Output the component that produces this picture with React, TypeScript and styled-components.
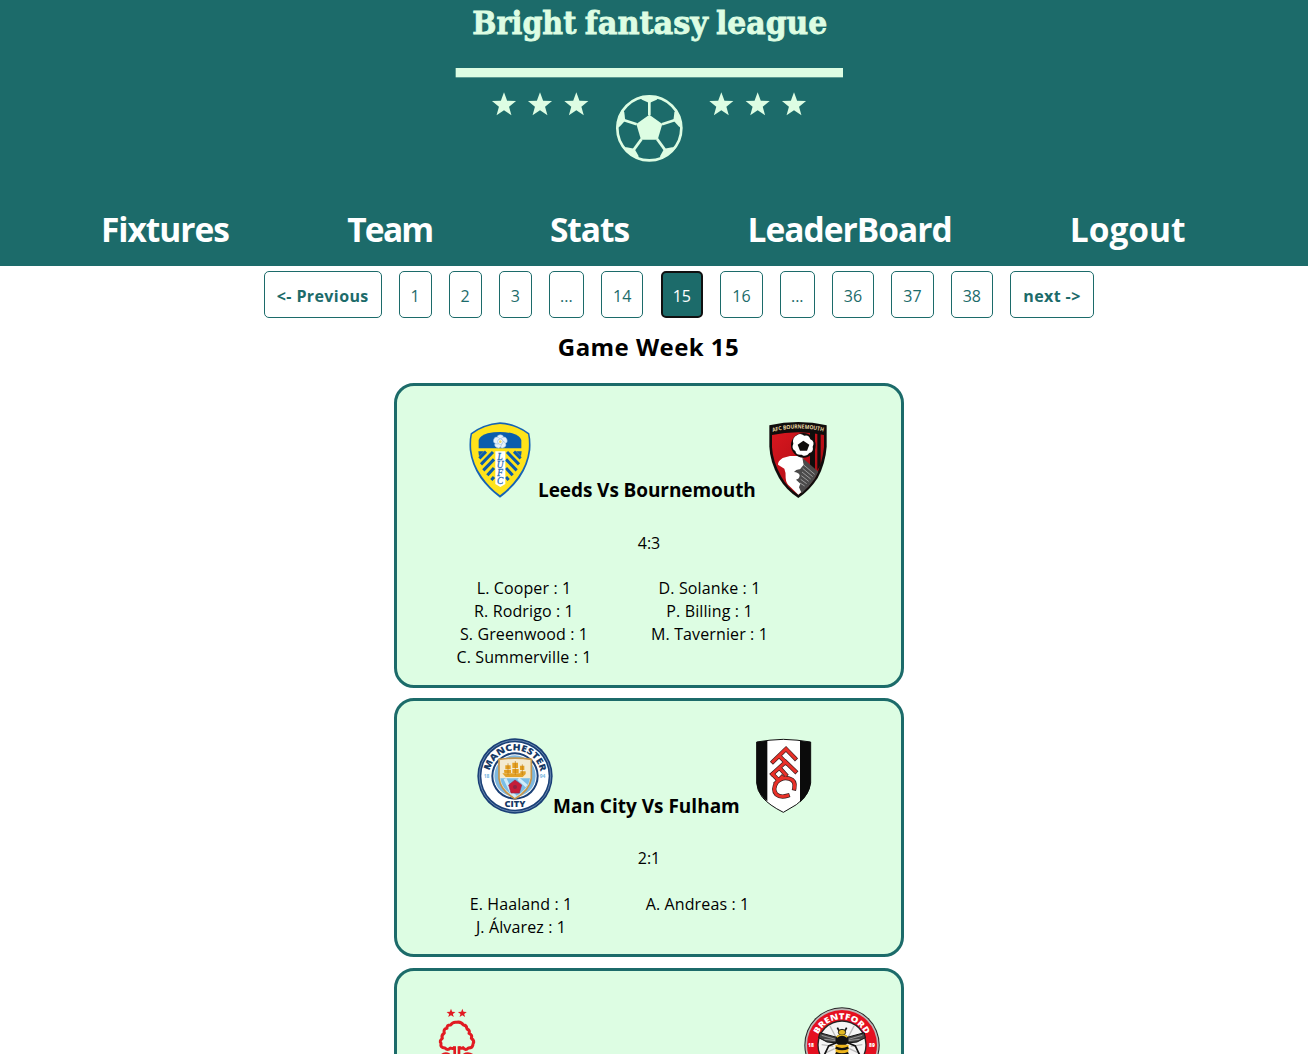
import React from "react";
import styled, { createGlobalStyle } from "styled-components";

const teal = "#1c6b6a";
const mint = "#ddfde3";

const Global = createGlobalStyle`
  * { box-sizing: border-box; }
  body { margin: 0; background: #fff; font-family: "Open Sans", "Noto Sans", sans-serif; color: #000; overflow: hidden; }
`;

const Page = styled.div`
  height: 1054px;
  overflow: hidden;
  display: flex;
  flex-direction: column;
  align-items: center;
`;

const Header = styled.header`
  width: 100%;
  height: 266px;
  flex: none;
  background: ${teal};
  display: flex;
  flex-direction: column;
`;

const Logo = styled.svg`
  display: block;
  width: 420px;
  height: 180px;
  margin-left: 440px;
  flex: none;
  overflow: visible;
`;

const Nav = styled.nav`
  display: flex;
  gap: 118.7px;
  padding: 24px 0 0 101px;
`;

const NavLink = styled.a<{ $w: number; $ls?: number }>`
  width: ${(p) => p.$w}px;
  font-size: 33.5px;
  line-height: 50px;
  font-weight: 700;
  color: #fff;
  white-space: nowrap;
  letter-spacing: ${(p) => p.$ls ?? 0}px;
`;

const Pager = styled.div`
  display: flex;
  gap: 17.1px;
  margin-top: 5px;
  width: 830px;
  margin-left: 50px;
  flex: none;
`;

const PageButton = styled.button<{ $w: number; $active?: boolean; $bold?: boolean }>`
  width: ${(p) => p.$w}px;
  height: 47px;
  flex: none;
  padding: 3px 0 0;
  border: ${(p) => (p.$active ? "2px solid #101010" : `1px solid ${teal}`)};
  border-radius: 5px;
  background: ${(p) => (p.$active ? teal : "#fff")};
  color: ${(p) => (p.$active ? "#fff" : teal)};
  font-family: inherit;
  font-size: 16px;
  font-weight: ${(p) => (p.$bold ? 700 : 400)};
  letter-spacing: ${(p) => (p.$bold ? 0.4 : 0)}px;
  white-space: nowrap;
`;

const Title = styled.h2`
  margin: 11px 11px 0 0;
  font-size: 24px;
  line-height: 36px;
  font-weight: 700;
  letter-spacing: 0.45px;
  width: 181px;
  flex: none;
  white-space: nowrap;
  display: flex;
  justify-content: center;
`;

const Cards = styled.main`
  width: 510px;
  margin-top: 18px;
  margin-left: -10px;
  display: flex;
  flex-direction: column;
`;

const Card = styled.section<{ $h: number; $top: number; $after: number }>`
  height: ${(p) => p.$h}px;
  flex: none;
  padding-top: ${(p) => p.$top}px;
  margin-bottom: ${(p) => p.$after}px;
  border: 3px solid ${teal};
  border-radius: 20px;
  background: ${mint};
  display: flex;
  flex-direction: column;
`;

const Match = styled.div`
  display: flex;
  justify-content: center;
  height: 76px;
`;

const Crest = styled.svg`
  width: 76px;
  height: 76px;
  display: block;
  flex: none;
`;

const Teams = styled.h3<{ $w: number; $ls: number }>`
  width: ${(p) => p.$w}px;
  margin: 54px 5px 0 0;
  font-size: 19px;
  line-height: 28px;
  font-weight: 700;
  letter-spacing: ${(p) => p.$ls}px;
  white-space: nowrap;
`;

const Score = styled.div<{ $top: number }>`
  margin-top: ${(p) => p.$top}px;
  line-height: 23px;
  font-size: 16px;
  text-align: center;
`;

const Scorers = styled.div<{ $left: number; $gap: number; $top: number }>`
  display: flex;
  gap: ${(p) => p.$gap}px;
  padding-left: ${(p) => p.$left}px;
  margin-top: ${(p) => p.$top}px;
`;

const ScorerList = styled.ul<{ $w: number }>`
  list-style: none;
  margin: 0;
  padding: 0;
  width: ${(p) => p.$w}px;
  display: flex;
  flex-direction: column;
  align-items: center;
  font-size: 16px;
  line-height: 23px;
  letter-spacing: 0.12px;
  white-space: nowrap;
`;

const starPoints = (cx: number, cy: number, r: number) =>
  Array.from({ length: 10 }, (_, i) => {
    const a = (Math.PI * i) / 5 - Math.PI / 2;
    const q = i % 2 ? r * 0.42 : r;
    return `${cx + q * Math.cos(a)},${cy + q * Math.sin(a)}`;
  }).join(" ");

const LeagueLogo = () => (
  <Logo viewBox="0 0 1260 540" fill={mint}>
    <g fontFamily="'DejaVu Serif', serif" fontWeight="700" fontSize="96" stroke={mint} strokeWidth="2.5">
      <text x="97" y="103" textLength="312" lengthAdjust="spacingAndGlyphs">Bright</text>
      <text x="434" y="103" textLength="370" lengthAdjust="spacingAndGlyphs">fantasy</text>
      <text x="828" y="103" textLength="334" lengthAdjust="spacingAndGlyphs">league</text>
    </g>
    <rect x="47" y="204" width="1162" height="28" />
    {[192, 300, 409, 844, 953, 1062].map((x) => (
      <polygon key={x} points={starPoints(x, 315, 38)} />
    ))}
    <circle cx="628" cy="385" r="96" fill="none" stroke={mint} strokeWidth="8" />
    {[0, 72, 144, 216, 288].map((a) => (
      <g key={a} transform={`rotate(${a} 628 385)`}>
        <path d="M628 345V306" stroke={mint} strokeWidth="8" />
        <path d="M598 291Q628 283 658 291L650 299L628 309L606 299Z" />
      </g>
    ))}
    <polygon points="628,344 667,372 653,419 603,419 589,372" />
  </Logo>
);

const Leeds = () => (
  <Crest viewBox="36 36 228 228">
    <path d="M150 37Q177 38 201 49Q222 57 238 70Q243 92 241 120Q236 164 209 204Q184 238 150 263Q116 238 91 204Q64 164 59 120Q57 92 62 70Q98 42 150 37Z" fill="#1763b5" />
    <path d="M150 42Q199 45 234 73Q238 91 236 119Q231 163 204 200Q181 233 150 256Q119 233 96 200Q69 163 64 119Q62 91 66 73Q101 45 150 42Z" fill="#ffe31b" />
    <path d="M86 115V90Q91 76 113 70Q150 62 187 70Q209 76 214 90V115Z" fill="#0b5dad" />
    <g stroke="#0b5dad" strokeWidth="9">
      <path d="M88 145L108 125M93 163L129 126M100 181L132 148M112 196L132 174M124 210L132 201M212 145L192 125M207 163L171 126M200 181L168 148M188 196L168 174M176 210L168 201" />
    </g>
    <path d="M85 124H102L87 139ZM215 124H198L213 139Z" fill="#0b5dad" />
    <path d="M136 124H166V222L151 231L136 222Z" fill="#fff" />
    {[0, 72, 144, 216, 288].map((a) => (
      <circle key={a} cx="151" cy="84" r="10" fill="#e8f2fa" stroke="#8db5d9" strokeWidth="1.5" transform={`rotate(${a} 151 95)`} />
    ))}
    <circle cx="151" cy="95" r="8" fill="#fff" stroke="#8db5d9" strokeWidth="2" />
    <circle cx="151" cy="95" r="4" fill="#e7d66c" />
    <g fill="#2a6bb5" fontFamily="'Liberation Serif', serif" fontStyle="italic" fontSize="28" textAnchor="middle" stroke="#2a6bb5" strokeWidth="0.8">
      <text x="150" y="150">L</text>
      <text x="150" y="175">U</text>
      <text x="150" y="199">F</text>
      <text x="150" y="223">C</text>
    </g>
  </Crest>
);

const Bournemouth = () => (
  <Crest viewBox="30 36 228 228">
    <defs>
      <linearGradient id="bred" x1="0" y1="0" x2="1" y2="1">
        <stop offset="0" stopColor="#d8171f" />
        <stop offset=".6" stopColor="#b80f17" />
        <stop offset="1" stopColor="#8b0b11" />
      </linearGradient>
      <path id="bname" d="M68 66Q145 45 224 66" />
    </defs>
    <path d="M58 46Q101 36 145 36Q188 36 230 46V110Q226 161 203 204Q180 240 145 264Q108 240 87 204Q60 156 58 110Z" fill="#100d0c" />
    <path d="M66 75Q144 58 222 75V112Q217 159 197 200Q176 233 145 254Q112 233 94 200Q68 154 66 112Z" fill="url(#bred)" />
    <path d="M180 67L195 69V190L180 172ZM202 70L212 71V165L202 181Z" fill="#100d0c" />
    <text fill="#e9d7a5" fontFamily="'Open Sans', sans-serif" fontWeight="700" fontSize="17">
      <textPath href="#bname" textLength="154" lengthAdjust="spacingAndGlyphs">AFC BOURNEMOUTH</textPath>
    </text>
    <path d="M98 144L120 138H153Q163 144 161 158L184 178L200 190L176 227L145 254L119 229Q108 220 107 204Q108 187 103 176L84 164Q83 154 98 144Z" fill="#fff" />
    <path d="M157 143L205 185Q196 207 176 229L155 250L147 232L151 221L138 209Q149 207 149 195Q145 187 132 186Q138 177 150 178L161 164Z" fill="#4b4a4a" />
    <g stroke="#c4c4c4" strokeWidth="2">
      {[1, 2, 3, 4, 5, 6].map((i) => (
        <path key={i} d={`M${162 - i * 2} ${153 + i * 11}L${200 - i * 6} ${186 + i * 7}`} />
      ))}
    </g>
    <circle cx="160" cy="106" r="37" fill="#100d0c" />
    <path d="M142 75Q151 68 163 77Q177 73 181 88Q196 95 188 110Q192 125 178 129Q168 143 155 134Q139 137 136 123Q123 115 130 101Q125 83 142 75Z" fill="#fff" />
    <path d="M160 92L178 104L171 122H150L143 104Z" fill="#100d0c" />
  </Crest>
);

const ManCity = () => (
  <Crest viewBox="35 37 228 228">
    <defs>
      <path id="cityTop" d="M72 151A77 77 0 0 1 226 151" />
    </defs>
    <circle cx="149" cy="151" r="113" fill="#193f76" />
    <circle cx="149" cy="151" r="107" fill="none" stroke="#8da8c9" strokeWidth="2" />
    <circle cx="149" cy="151" r="101" fill="#fff" />
    <circle cx="149" cy="151" r="71" fill="#193f76" />
    <circle cx="149" cy="151" r="65" fill="#fff" />
    <circle cx="149" cy="151" r="62" fill="#7eb7df" />
    <path d="M101 101Q149 94 198 101V158Q193 194 149 219Q105 194 101 158Z" fill="#f3ead0" stroke="#c4954b" strokeWidth="5" />
    <path d="M105 158H194Q190 191 149 214Q110 193 105 158Z" fill="#79bde8" />
    <path d="M119 159L139 202L151 213M159 159L184 181" stroke="#d1ecf9" strokeWidth="9" fill="none" />
    <path d="M111 143L121 154H172L181 145V137H165V143Z" fill="#e2a126" />
    <path d="M120 119H136V131H120ZM141 111H158V127H141ZM164 120H177V133H164ZM116 133H137V142H117ZM141 130H160V142H141Z" fill="#e4a021" />
    <path d="M128 113V148M150 106V148M171 116V148" stroke="#bd7b19" strokeWidth="2" />
    <polygon points="149,163 169,178 162,202 137,202 130,178" fill="#c51d39" stroke="#9a2444" strokeWidth="2" />
    <circle cx="149" cy="184" r="6" fill="#8d2441" />
    <g fill="#173965" fontFamily="'Open Sans', sans-serif" fontWeight="800" fontSize="27">
      <text><textPath href="#cityTop" startOffset="15" textLength="214" lengthAdjust="spacingAndGlyphs">MANCHESTER</textPath></text>
      <text x="149" y="244" textAnchor="middle" textLength="63" lengthAdjust="spacingAndGlyphs">CITY</text>
    </g>
    <g fill="#79b6df" fontFamily="'Open Sans', sans-serif" fontWeight="700" fontSize="15">
      <text x="55" y="158">18</text>
      <text x="223" y="158">94</text>
    </g>
  </Crest>
);

const Fulham = () => (
  <Crest viewBox="15 37 228 228">
    <path d="M50 49Q90 42 130 41Q171 42 212 49V172Q207 209 169 237L130 260Q88 239 67 215Q51 194 50 172Z" fill="#fff" stroke="#111" strokeWidth="3" />
    <path d="M50 49L82 45V227Q51 204 50 172ZM180 45L212 49V172Q210 205 180 230Z" fill="#0b0b0b" />
    <g fill="none" strokeLinecap="square" strokeLinejoin="miter">
      {[["#3a2020", 13], ["#e93028", 9]].map(([c, w]) => (
        <g key={c} stroke={c} strokeWidth={w}>
          <path d="M99 108L138 70L165 98M118 91L138 111M97 145L137 109L166 137M119 127L137 147" />
          <path d="M163 188Q168 165 148 159Q127 152 110 170Q96 191 109 206Q122 217 143 210M98 146L111 159M108 172L126 154" />
        </g>
      ))}
    </g>
  </Crest>
);

const Forest = () => (
  <Crest viewBox="101 141 228 228">
    <polygon points={starPoints(197, 160, 14)} fill="#e11b22" />
    <polygon points={starPoints(231, 160, 14)} fill="#e11b22" />
    <path d="M208 260Q205 269 195 264Q187 273 179 264Q164 263 167 250Q161 243 171 235Q167 226 177 219Q173 207 185 205Q184 194 196 195Q202 185 214 187Q227 184 234 195Q244 195 245 207Q255 211 251 220Q262 224 258 235Q269 243 263 252Q263 264 249 264Q241 273 233 263Q225 268 221 260" fill="none" stroke="#e11b22" strokeWidth="9" strokeLinejoin="round" />
    <path d="M204 259H212V300H204ZM217 259H225V300H217Z" fill="#e11b22" />
    <path d="M168 286Q179 276 193 284M235 284Q249 276 263 286" stroke="#e11b22" strokeWidth="7" fill="none" />
  </Crest>
);

const Brentford = () => (
  <Crest viewBox="72 141 228 228">
    <defs>
      <path id="beeTop" d="M108 255A77 77 0 0 1 262 255" />
    </defs>
    <circle cx="186" cy="255" r="113" fill="#252525" />
    <circle cx="186" cy="255" r="110" fill="#bdb8b8" />
    <circle cx="186" cy="255" r="105" fill="#e51020" />
    <circle cx="186" cy="255" r="74" fill="#242424" />
    <circle cx="186" cy="255" r="70" fill="#f5f5f5" />
    <path d="M150 198L173 242M222 198L199 242M125 254L160 259M247 254L212 259M132 281L164 266M240 281L208 266" stroke="#bcbcbc" strokeWidth="4" />
    <path d="M174 233L119 218L116 233L141 246L171 249ZM198 233L253 218L256 233L231 246L201 249Z" fill="#454545" stroke="#111" strokeWidth="3" />
    <path d="M125 226L170 239M133 238L170 242M247 226L202 239M239 238L202 242" stroke="#c2c2c2" strokeWidth="2" />
    <path d="M169 248L146 258L133 285M203 248L226 258L239 285M179 216L172 203M193 216L200 203" stroke="#121212" strokeWidth="5" fill="none" />
    <ellipse cx="186" cy="217" rx="11" ry="9" fill="#e1b823" stroke="#222" strokeWidth="3" />
    <ellipse cx="186" cy="240" rx="20" ry="18" fill="#111" />
    <path d="M170 231Q186 219 202 231" stroke="#e1b823" strokeWidth="5" fill="none" />
    <path d="M166 254H206L204 298Q186 327 168 298Z" fill="#edb51c" />
    <path d="M167 263Q186 272 205 263M167 279Q186 288 205 279" stroke="#111" strokeWidth="7" fill="none" />
    <g fill="#fff" fontFamily="'Open Sans', sans-serif" fontWeight="800">
      <text fontSize="25"><textPath href="#beeTop" startOffset="32" textLength="178" lengthAdjust="spacingAndGlyphs">BRENTFORD</textPath></text>
      <text x="84" y="260" fontSize="15">18</text>
      <text x="267" y="260" fontSize="15">89</text>
    </g>
  </Crest>
);

const pages: [string, number][] = [
  ["<- Previous", 117.5], ["1", 33], ["2", 33], ["3", 33], ["...", 35], ["14", 42.5], ["15", 42.5], ["16", 42.5],
  ["...", 35], ["36", 42.3], ["37", 42.3], ["38", 42.3], ["next ->", 84],
];

const matches = [
  {
    teams: "Leeds Vs Bournemouth", w: 217, ls: -0.08, Home: Leeds, Away: Bournemouth, score: "4:3",
    h: 305, top: 36, after: 10, left: 60, gap: 62, lw: 134, rw: 113, scoreTop: 34, listTop: 22,
    home: ["L. Cooper : 1", "R. Rodrigo : 1", "S. Greenwood : 1", "C. Summerville : 1"],
    away: ["D. Solanke : 1", "P. Billing : 1", "M. Tavernier : 1"],
  },
  {
    teams: "Man City Vs Fulham", w: 187, ls: 0, Home: ManCity, Away: Fulham, score: "2:1",
    h: 259, top: 37, after: 11, left: 73, gap: 74, lw: 102, rw: 103, scoreTop: 33, listTop: 23,
    home: ["E. Haaland : 1", "J. Álvarez : 1"],
    away: ["A. Andreas : 1"],
  },
  {
    teams: "Nottingham Forest Vs Brentford", w: 304, ls: 0, Home: Forest, Away: Brentford, score: "",
    h: 259, top: 36, after: 0, left: 60, gap: 62, lw: 134, rw: 113, scoreTop: 33, listTop: 22, home: [], away: [],
  },
];

export default function App() {
  return (
    <Page>
      <Global />
      <Header>
        <LeagueLogo />
        <Nav>
          <NavLink $w={127.5} $ls={-1.05}>Fixtures</NavLink>
          <NavLink $w={84} $ls={-1.75}>Team</NavLink>
          <NavLink $w={79} $ls={-1.05}>Stats</NavLink>
          <NavLink $w={203.5} $ls={-1}>LeaderBoard</NavLink>
          <NavLink $w={115}>Logout</NavLink>
        </Nav>
      </Header>
      <Pager>
        {pages.map(([label, w], i) => (
          <PageButton key={i} $w={w} $active={label === "15"} $bold={w > 80}>
            {label}
          </PageButton>
        ))}
      </Pager>
      <Title>Game Week 15</Title>
      <Cards>
        {matches.map((m) => (
          <Card key={m.teams} $h={m.h} $top={m.top} $after={m.after}>
            <Match>
              <m.Home />
              <Teams $w={m.w} $ls={m.ls}>{m.teams}</Teams>
              <m.Away />
            </Match>
            <Score $top={m.scoreTop}>{m.score}</Score>
            <Scorers $left={m.left} $gap={m.gap} $top={m.listTop}>
              <ScorerList $w={m.lw}>{m.home.map((s) => <li key={s}>{s}</li>)}</ScorerList>
              <ScorerList $w={m.rw}>{m.away.map((s) => <li key={s}>{s}</li>)}</ScorerList>
            </Scorers>
          </Card>
        ))}
      </Cards>
    </Page>
  );
}
